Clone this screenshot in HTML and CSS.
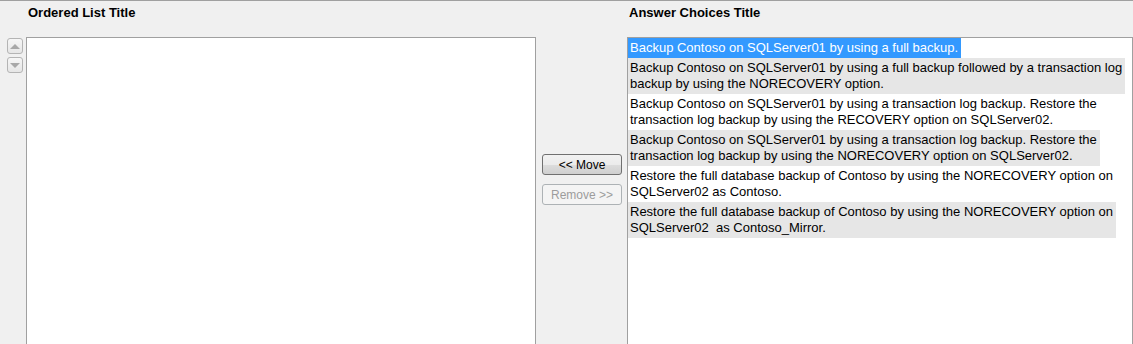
FILE: index.html
```html
<!doctype html>
<html>
<head>
    <meta charset="utf-8" />
    <title>Ordered List</title>
    <link rel="stylesheet" href="styles.css">
</head>

<body>
    <div id="editor">
        <div class="title ordered">Ordered List Title</div>
        <div class="title answers">Answer Choices Title</div>

        <div class="order-arrows">
            <button class="arrow up" disabled><span></span></button>
            <button class="arrow down" disabled><span></span></button>
        </div>
        <div class="listbox" id="ordered"></div>
        <div class="moves">
            <button class="move">&lt;&lt; Move</button>
            <button class="move" disabled>Remove &gt;&gt;</button>
        </div>
        <div class="listbox" id="choices">
            <div class="choice selected">Backup Contoso on SQLServer01 by using a full backup.</div>
            <div class="choice alt">Backup Contoso on SQLServer01 by using a full backup followed by a transaction log<br>backup by using the NORECOVERY option.</div>
            <div class="choice">Backup Contoso on SQLServer01 by using a transaction log backup. Restore the<br>transaction log backup by using the RECOVERY option on SQLServer02.</div>
            <div class="choice alt">Backup Contoso on SQLServer01 by using a transaction log backup. Restore the<br>transaction log backup by using the NORECOVERY option on SQLServer02.</div>
            <div class="choice">Restore the full database backup of Contoso by using the NORECOVERY option on<br>SQLServer02 as Contoso.</div>
            <div class="choice alt">Restore the full database backup of Contoso by using the NORECOVERY option on<br>SQLServer02&nbsp; as Contoso_Mirror.</div>
        </div>
    </div>
</body>

</html>
```

FILE: styles.css
```css
:root {
    --bg: #f0f0f0;
    --frame: #a0a0a0;
}
html, body {
    background-color: var(--bg);
}
body {
    margin: 0;
    border-top: 1px solid var(--frame);
    font-family: 'Liberation Sans', Arial, sans-serif;
    font-size: 13px;
    color: #000;
    overflow: hidden;
}

#editor {
    display: grid;
    grid-template-columns: 19px 510px 91px 506px;
    grid-template-rows: 36px auto;
    padding-left: 7px;
}
.title {
    padding: 4px 0 0 2px;
    font-weight: bold;
    line-height: 16px;
}
    .title.ordered {
        grid-column: 2;
    }
    .title.answers {
        grid-column: 4;
    }

/* up / down */
.order-arrows {
    display: flex;
    flex-direction: column;
    gap: 3px;
    padding-top: 1px;
}
.arrow {
    box-sizing: border-box;
    width: 16px;
    height: 16px;
    padding: 0;
    border: 1px solid #b4b4b4;
    border-radius: 3px;
    background: linear-gradient(#f6f6f6, #e6e6e6);
    display: flex;
    align-items: center;
    justify-content: center;
}
    .arrow span {
        width: 0;
        height: 0;
        border-left: 5px solid transparent;
        border-right: 5px solid transparent;
    }
    .arrow.up span {
        border-bottom: 5px solid #a8a8a8;
    }
    .arrow.down span {
        border-top: 5px solid #a8a8a8;
    }

.listbox {
    height: 310px;
    border: 1px solid var(--frame);
    background-color: #fff;
    box-sizing: border-box;
}

/* middle buttons */
.moves {
    display: flex;
    flex-direction: column;
    gap: 9px;
    padding: 117px 0 0 6px;
}
.move {
    width: 80px;
    height: 21px;
    padding: 0;
    border: 1px solid #707070;
    border-radius: 3px;
    background: linear-gradient(#f2f2f2 0%, #ebebeb 50%, #dddddd 50%, #cfcfcf 100%);
    font-family: 'Liberation Sans', Arial, sans-serif;
    font-size: 12px;
    color: #000;
}
.move:disabled {
    border-color: #adb2b5;
    background: #f4f4f4;
    color: #9c9c9c;
}

/* answer choices */
.choice {
    width: fit-content;
    padding: 2px 3px 2px 2px;
    line-height: 16px;
    white-space: nowrap;
}
    .choice.alt {
        background-color: #e6e6e6;
    }
    .choice.selected {
        background-color: #3399ff;
        color: #fff;
    }
```
